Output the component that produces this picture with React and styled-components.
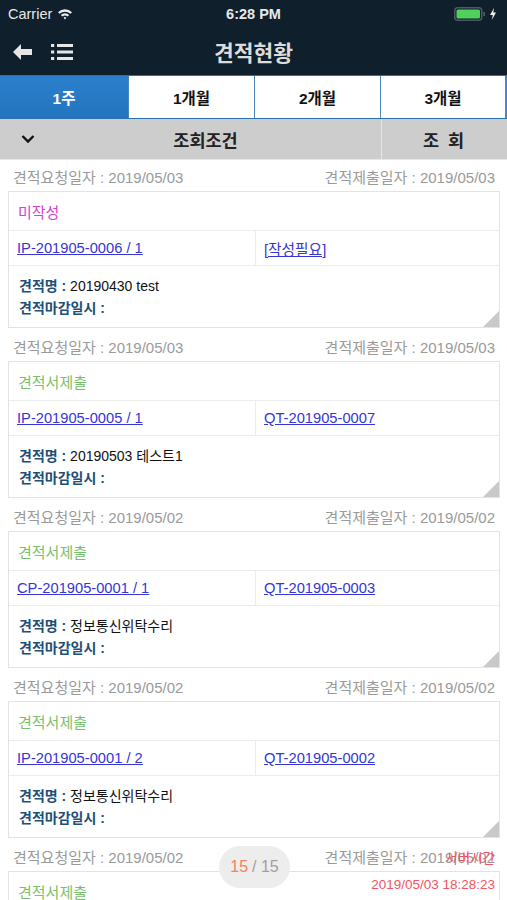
import React from "react";
import styled, { createGlobalStyle } from "styled-components";

const Global = createGlobalStyle`
  html, body { margin: 0; padding: 0; background: #fff; }
  body { font-family: "Liberation Sans", "Noto Sans CJK KR", sans-serif; }
  * { box-sizing: border-box; }
`;

const Screen = styled.div`
  width: 507px;
  height: 900px;
  overflow: hidden;
  position: relative;
  background: #fff;
`;

const Top = styled.div`
  background: #0f1f2b;
  color: #fff;
`;

const StatusBar = styled.div`
  height: 28px;
  display: grid;
  grid-template-columns: 1fr auto 1fr;
  align-items: center;
  padding: 0 8px;
  font-size: 14.5px;
  color: #e8e8e8;
`;

const Carrier = styled.div`
  display: flex;
  align-items: center;
  gap: 5px;
`;

const Clock = styled.div`
  font-weight: bold;
  font-size: 14.5px;
`;

const BatteryWrap = styled.div`
  display: flex;
  justify-content: flex-end;
  align-items: center;
  gap: 3px;
  padding-right: 2px;
`;

const NavBar = styled.div`
  height: 47px;
  display: flex;
  align-items: center;
  position: relative;
  padding: 0 12px;
  gap: 18px;
`;

const Title = styled.div`
  position: absolute;
  left: 0;
  right: 0;
  text-align: center;
  font-size: 21.5px;
  font-weight: bold;
  color: #dcdcdc;
  pointer-events: none;
`;

const Tabs = styled.div`
  display: grid;
  grid-template-columns: 128px 126px 126px 1fr;
  height: 44px;
  border-top: 1px solid #2a6fae;
  border-bottom: 1px solid #2a6fae;
  background: #fff;
`;

const Tab = styled.div`
  display: flex;
  align-items: center;
  justify-content: center;
  font-size: 15.5px;
  font-weight: bold;
  color: ${(p) => (p.$active ? "#fff" : "#111")};
  background: ${(p) => (p.$active ? "linear-gradient(#2b80cc, #2474bf)" : "#fff")};
  border-left: ${(p) => (p.$first ? "none" : "1px solid #4a86c0")};
  border-right: ${(p) => (p.$last ? "2px solid #4a86c0" : "none")};
`;

const CondBar = styled.div`
  display: grid;
  grid-template-columns: 56px 1fr 126px;
  height: 41px;
  background: #cdcdcd;
  border-bottom: 1px solid #e6e6e6;
`;

const Chevron = styled.div`
  display: flex;
  align-items: center;
  padding-left: 21px;
`;

const CondTitle = styled.div`
  display: flex;
  align-items: center;
  justify-content: center;
  padding-right: 26px;
  font-size: 17.5px;
  font-weight: bold;
  color: #222;
`;

const SearchBtn = styled.div`
  display: flex;
  align-items: center;
  justify-content: center;
  border-left: 1px solid #e4e4e4;
  font-size: 17.5px;
  font-weight: bold;
  color: #222;
  letter-spacing: 2px;
`;

const List = styled.div`
  padding: 0 7px 0 8px;
`;

const DateRow = styled.div`
  display: flex;
  justify-content: space-between;
  align-items: center;
  height: 31px;
  padding: 2px 5px 0 5px;
  font-size: 15px;
  color: #9a9a9a;
`;

const Card = styled.div`
  border: 1px solid #e3e3e3;
  margin-bottom: 2px;
  position: relative;
  background: #fff;
`;

const StatusRow = styled.div`
  height: 39px;
  display: flex;
  align-items: center;
  padding-left: 9px;
  font-size: 15px;
  color: ${(p) => p.$color};
  border-bottom: 1px solid #ececec;
`;

const LinkRow = styled.div`
  display: grid;
  grid-template-columns: 246px 1fr;
  height: 35px;
  border-bottom: 1px solid #ececec;
`;

const LinkCell = styled.div`
  display: flex;
  align-items: center;
  padding-left: 8px;
  border-left: ${(p) => (p.$right ? "1px solid #ececec" : "none")};
`;

const Link = styled.a`
  color: #3535d8;
  text-decoration: underline;
  font-size: 14.7px;
`;

const Info = styled.div`
  height: 61px;
  padding: 9px 10px 0;
  font-size: 14px;
  line-height: 22px;
  color: #111;
`;

const Label = styled.span`
  color: #1d4f78;
  font-weight: bold;
`;

const Corner = styled.div`
  position: absolute;
  right: 0;
  bottom: 0;
  width: 0;
  height: 0;
  border-style: solid;
  border-width: 0 0 16px 16px;
  border-color: transparent transparent #c9c9c9 transparent;
`;

const Pager = styled.div`
  position: absolute;
  left: 219px;
  top: 846px;
  width: 71px;
  height: 42px;
  border-radius: 21px;
  background: rgba(236, 236, 236, 0.92);
  display: flex;
  align-items: center;
  justify-content: center;
  font-size: 16px;
  color: #a0a0a0;
  gap: 4px;
`;

const PagerCur = styled.span`
  color: #f0845a;
`;

const ServerTime = styled.div`
  position: absolute;
  right: 12px;
  top: 846px;
  text-align: right;
  color: #f2555f;
  font-size: 13.5px;
  line-height: 26px;
`;

const items = [
  { req: "2019/05/03", sub: "2019/05/03", status: "미작성", color: "#d640d6", l1: "IP-201905-0006 / 1", l2: "[작성필요]", name: "20190430 test" },
  { req: "2019/05/03", sub: "2019/05/03", status: "견적서제출", color: "#7cbf6a", l1: "IP-201905-0005 / 1", l2: "QT-201905-0007", name: "20190503 테스트1" },
  { req: "2019/05/02", sub: "2019/05/02", status: "견적서제출", color: "#7cbf6a", l1: "CP-201905-0001 / 1", l2: "QT-201905-0003", name: "정보통신위탁수리" },
  { req: "2019/05/02", sub: "2019/05/02", status: "견적서제출", color: "#7cbf6a", l1: "IP-201905-0001 / 2", l2: "QT-201905-0002", name: "정보통신위탁수리" },
  { req: "2019/05/02", sub: "2019/05/02", status: "견적서제출", color: "#7cbf6a", l1: "IP-201905-0001 / 1", l2: "QT-201905-0001", name: "정보통신위탁수리" },
];

export default function App() {
  return (
    <Screen>
      <Global />
      <Top>
        <StatusBar>
          <Carrier>
            Carrier
            <svg width="16" height="12" viewBox="0 0 16 12">
              <path d="M1 4.2 A10 10 0 0 1 15 4.2 L13.4 5.8 A7.8 7.8 0 0 0 2.6 5.8 Z" fill="#eee" />
              <path d="M3.8 7 A6 6 0 0 1 12.2 7 L10.6 8.6 A3.8 3.8 0 0 0 5.4 8.6 Z" fill="#eee" />
              <path d="M6.6 9.8 A2 2 0 0 1 9.4 9.8 L8 11.4 Z" fill="#eee" />
            </svg>
          </Carrier>
          <Clock>6:28 PM</Clock>
          <BatteryWrap>
            <svg width="32" height="14" viewBox="0 0 32 14">
              <rect x="0.75" y="0.75" width="27" height="12.5" rx="3" fill="none" stroke="#4c5a62" strokeWidth="1.5" />
              <rect x="2.5" y="2.5" width="23.5" height="9" rx="1.5" fill="#4fd15c" />
              <rect x="29.2" y="4.8" width="1.8" height="4.4" rx="0.8" fill="#4c5a62" />
            </svg>
            <svg width="8" height="12" viewBox="0 0 8 12">
              <path d="M5 0 L1 7 H3.8 L2.8 12 L7 4.6 H4.3 Z" fill="#eee" />
            </svg>
          </BatteryWrap>
        </StatusBar>
        <NavBar>
          <svg width="21" height="18" viewBox="0 0 21 18">
            <path d="M9 1 L1 9 L9 17 L9 12 L20 12 L20 6 L9 6 Z" fill="#e6e6e6" />
          </svg>
          <svg width="22" height="18" viewBox="0 0 22 18">
            <rect x="0" y="1" width="3.2" height="3" fill="#e6e6e6" />
            <rect x="0" y="7.5" width="3.2" height="3" fill="#e6e6e6" />
            <rect x="0" y="14" width="3.2" height="3" fill="#e6e6e6" />
            <rect x="6" y="1" width="16" height="3" fill="#e6e6e6" />
            <rect x="6" y="7.5" width="16" height="3" fill="#e6e6e6" />
            <rect x="6" y="14" width="16" height="3" fill="#e6e6e6" />
          </svg>
          <Title>견적현황</Title>
        </NavBar>
      </Top>
      <Tabs>
        <Tab $active $first>1주</Tab>
        <Tab>1개월</Tab>
        <Tab>2개월</Tab>
        <Tab $last>3개월</Tab>
      </Tabs>
      <CondBar>
        <Chevron>
          <svg width="14" height="10" viewBox="0 0 14 10">
            <path d="M1.5 2 L7 7.5 L12.5 2" fill="none" stroke="#111" strokeWidth="2.4" />
          </svg>
        </Chevron>
        <CondTitle>조회조건</CondTitle>
        <SearchBtn>조 회</SearchBtn>
      </CondBar>
      <List>
        {items.map((it, i) => (
          <div key={i}>
            <DateRow>
              <span>견적요청일자 : {it.req}</span>
              <span>견적제출일자 : {it.sub}</span>
            </DateRow>
            <Card>
              <StatusRow $color={it.color}>{it.status}</StatusRow>
              <LinkRow>
                <LinkCell><Link>{it.l1}</Link></LinkCell>
                <LinkCell $right><Link>{it.l2}</Link></LinkCell>
              </LinkRow>
              <Info>
                <div><Label>견적명 : </Label>{it.name}</div>
                <div><Label>견적마감일시 :</Label></div>
              </Info>
              <Corner />
            </Card>
          </div>
        ))}
      </List>
      <Pager>
        <PagerCur>15</PagerCur>
        <span>/ 15</span>
      </Pager>
      <ServerTime>
        <div>서버시간</div>
        <div>2019/05/03 18:28:23</div>
      </ServerTime>
    </Screen>
  );
}
